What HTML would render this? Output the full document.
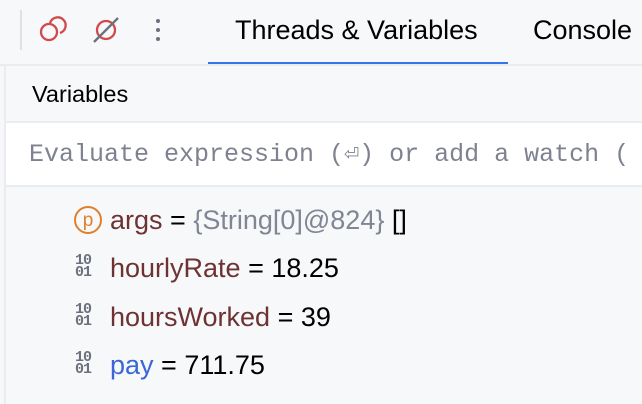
<!DOCTYPE html><html><head><style>
body{margin:0;width:642px;height:404px;overflow:hidden;background:#f7f8fa;font-family:"Liberation Sans",sans-serif;position:relative}
.a{position:absolute}
.row{position:absolute;left:76px;font-size:27px;color:#000;white-space:nowrap;line-height:32px}
.n{color:#6e3232}
.bin{position:absolute;left:-1px;top:3px;font-size:15px;font-weight:bold;color:#6c707e;line-height:12px;font-family:"Liberation Mono",monospace;letter-spacing:-1px}
</style></head><body>
<div class="a" style="left:20px;top:10px;width:2px;height:40px;background:#dfe1e5"></div>
<svg class="a" style="left:38px;top:14px" width="34" height="32" viewBox="0 0 34 32"><circle cx="11" cy="18" r="8" fill="none" stroke="#d04a4d" stroke-width="2.3"/><path d="M12 9 A8 8 0 1 1 22 19" fill="none" stroke="#d04a4d" stroke-width="2.3"/></svg>
<svg class="a" style="left:90px;top:14px" width="34" height="32" viewBox="0 0 34 32"><circle cx="16" cy="16" r="9" fill="none" stroke="#d04a4d" stroke-width="2.3"/><line x1="4" y1="28" x2="28" y2="4" stroke="#6c707e" stroke-width="2.3"/></svg>
<div class="a" style="left:156px;top:19px;width:4px;height:4px;border-radius:2px;background:#6c707e;box-shadow:0 9px 0 #6c707e,0 18px 0 #6c707e"></div>
<div class="a" style="left:235px;top:15px;font-size:27px;white-space:nowrap">Threads &amp; Variables</div>
<div class="a" style="left:533px;top:15px;font-size:27px;white-space:nowrap">Console</div>
<div class="a" style="left:208px;top:62px;width:300px;height:3px;background:#3574f0"></div>
<div class="a" style="left:0;top:64px;width:642px;height:2px;background:#ebecf0"></div>
<div class="a" style="left:4px;top:66px;width:2px;height:338px;background:#ebecf0"></div>
<div class="a" style="left:32px;top:81px;font-size:23.5px">Variables</div>
<div class="a" style="left:6px;top:121px;width:636px;height:62px;background:#fff;border-top:2px solid #ebecf0;border-bottom:2px solid #ebecf0"></div>
<div class="a" style="left:29px;top:138px;font-size:25px;font-family:'Liberation Mono',monospace;color:#7e8290;white-space:nowrap">Evaluate expression (⏎) or add a watch (</div>
<div class="row" style="top:204px"><svg class="a" style="left:-3px;top:1px" width="30" height="30"><circle cx="15" cy="15" r="13" fill="none" stroke="#e0802a" stroke-width="2"/><text x="15" y="21" text-anchor="middle" font-size="19" fill="#e0802a" font-family="Liberation Sans">p</text></svg><span style="margin-left:34px" class="n">args</span> = <span style="color:#818594">{String[0]@824}</span> []</div>
<div class="row" style="top:252px"><div class="bin">10<br>01</div><span style="margin-left:34px" class="n">hourlyRate</span> = 18.25</div>
<div class="row" style="top:301px"><div class="bin">10<br>01</div><span style="margin-left:34px" class="n">hoursWorked</span> = 39</div>
<div class="row" style="top:349px"><div class="bin">10<br>01</div><span style="margin-left:34px;color:#3a66d6">pay</span> = 711.75</div>
</body></html>
